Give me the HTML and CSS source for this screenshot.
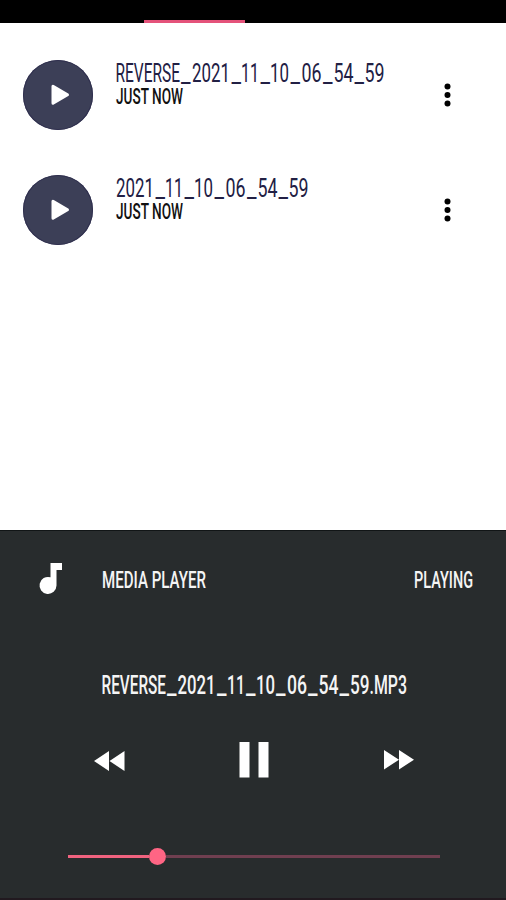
FILE: index.html
```
<!DOCTYPE html>
<html lang="en">
<head>
<meta charset="utf-8">
<title>Media Player</title>
<link rel="stylesheet" href="styles.css">
</head>
<body>
<main class="app">
  <header class="tabs"><div class="indicator"></div></header>
  <section class="list">
    <article class="row">
      <button class="play" aria-label="Play"><svg width="70" height="70" viewBox="0 0 70 70"><path d="M30 26.300V43.200L44.500 34.700Z" fill="#fff" stroke="#fff" stroke-width="3" stroke-linejoin="round"/></svg></button>
      <svg class="info" width="290" height="56" viewBox="0 0 290 56">
        <text class="name" y="22"><tspan x="-.5" textLength="64.500" lengthAdjust="spacingAndGlyphs">REVERSE</tspan><tspan x="65" textLength="9.500" lengthAdjust="spacingAndGlyphs">_</tspan><tspan x="76" textLength="38" lengthAdjust="spacingAndGlyphs">2021</tspan><tspan x="115.500" textLength="9.500" lengthAdjust="spacingAndGlyphs">_</tspan><tspan x="125" textLength="18" lengthAdjust="spacingAndGlyphs">11</tspan><tspan x="144.500" textLength="9.500" lengthAdjust="spacingAndGlyphs">_</tspan><tspan x="154" textLength="19" lengthAdjust="spacingAndGlyphs">10</tspan><tspan x="174.500" textLength="9.500" lengthAdjust="spacingAndGlyphs">_</tspan><tspan x="185.500" textLength="20" lengthAdjust="spacingAndGlyphs">06</tspan><tspan x="207" textLength="9.500" lengthAdjust="spacingAndGlyphs">_</tspan><tspan x="217.500" textLength="20" lengthAdjust="spacingAndGlyphs">54</tspan><tspan x="238.500" textLength="9.500" lengthAdjust="spacingAndGlyphs">_</tspan><tspan x="248.500" textLength="20" lengthAdjust="spacingAndGlyphs">59</tspan></text>
        <text class="time" x="0" y="44" textLength="67" lengthAdjust="spacingAndGlyphs">JUST NOW</text>
      </svg>
      <svg class="more" width="14" height="30" viewBox="0 0 14 30"><circle cx="7.500" cy="6.500" r="3"/><circle cx="7.500" cy="15" r="3"/><circle cx="7.500" cy="23.500" r="3"/></svg>
    </article>
    <article class="row">
      <button class="play" aria-label="Play"><svg width="70" height="70" viewBox="0 0 70 70"><path d="M30 26.300V43.200L44.500 34.700Z" fill="#fff" stroke="#fff" stroke-width="3" stroke-linejoin="round"/></svg></button>
      <svg class="info" width="290" height="56" viewBox="0 0 290 56">
        <text class="name" y="22"><tspan x="0" textLength="38" lengthAdjust="spacingAndGlyphs">2021</tspan><tspan x="39.500" textLength="9.500" lengthAdjust="spacingAndGlyphs">_</tspan><tspan x="49" textLength="18" lengthAdjust="spacingAndGlyphs">11</tspan><tspan x="68.500" textLength="9.500" lengthAdjust="spacingAndGlyphs">_</tspan><tspan x="78" textLength="19" lengthAdjust="spacingAndGlyphs">10</tspan><tspan x="98.500" textLength="9.500" lengthAdjust="spacingAndGlyphs">_</tspan><tspan x="109.500" textLength="20" lengthAdjust="spacingAndGlyphs">06</tspan><tspan x="131" textLength="9.500" lengthAdjust="spacingAndGlyphs">_</tspan><tspan x="141.500" textLength="20" lengthAdjust="spacingAndGlyphs">54</tspan><tspan x="162.500" textLength="9.500" lengthAdjust="spacingAndGlyphs">_</tspan><tspan x="172.500" textLength="20" lengthAdjust="spacingAndGlyphs">59</tspan></text>
        <text class="time" x="0" y="44" textLength="67" lengthAdjust="spacingAndGlyphs">JUST NOW</text>
      </svg>
      <svg class="more" width="14" height="30" viewBox="0 0 14 30"><circle cx="7.500" cy="6.500" r="3"/><circle cx="7.500" cy="15" r="3"/><circle cx="7.500" cy="23.500" r="3"/></svg>
    </article>
  </section>
  <section class="player">
    <div class="player-head">
      <svg class="note" width="24" height="32" viewBox="0 0 24 32"><path d="M11.500 0H23V7H17.500V22.500A8.500 8.500 0 1 1 11.500 14.300Z" fill="#fff"/></svg>
      <svg class="label" width="106" height="32" viewBox="0 0 106 32"><text x="0" y="25" textLength="104" lengthAdjust="spacingAndGlyphs">MEDIA PLAYER</text></svg>
      <svg class="status" width="60" height="32" viewBox="0 0 60 32"><text x="1" y="25" textLength="59" lengthAdjust="spacingAndGlyphs">PLAYING</text></svg>
    </div>
    <svg class="track" width="306" height="36" viewBox="0 0 306 36">
      <text y="27"><tspan x="-.5" textLength="64.500" lengthAdjust="spacingAndGlyphs">REVERSE</tspan><tspan x="65" textLength="9.500" lengthAdjust="spacingAndGlyphs">_</tspan><tspan x="75.500" textLength="38" lengthAdjust="spacingAndGlyphs">2021</tspan><tspan x="115" textLength="9.500" lengthAdjust="spacingAndGlyphs">_</tspan><tspan x="125" textLength="18" lengthAdjust="spacingAndGlyphs">11</tspan><tspan x="144" textLength="9.500" lengthAdjust="spacingAndGlyphs">_</tspan><tspan x="154" textLength="19" lengthAdjust="spacingAndGlyphs">10</tspan><tspan x="174" textLength="9.500" lengthAdjust="spacingAndGlyphs">_</tspan><tspan x="185" textLength="20" lengthAdjust="spacingAndGlyphs">06</tspan><tspan x="206" textLength="9.500" lengthAdjust="spacingAndGlyphs">_</tspan><tspan x="216.500" textLength="20" lengthAdjust="spacingAndGlyphs">54</tspan><tspan x="237.500" textLength="9.500" lengthAdjust="spacingAndGlyphs">_</tspan><tspan x="248" textLength="19.500" lengthAdjust="spacingAndGlyphs">59</tspan><tspan x="267.500" textLength="37.500" lengthAdjust="spacingAndGlyphs">.MP3</tspan></text>
    </svg>
    <div class="controls">
      <svg class="seek back" width="31" height="20" viewBox="0 0 31 20"><path d="M15 0V20L0 10ZM30.500 0V20L15.500 10Z"/></svg>
      <svg class="pause" width="30" height="36" viewBox="0 0 30 36"><path d="M.5 0H10.500V35.500H.5ZM19.500 0H29.500V35.500H19.500Z"/></svg>
      <svg class="seek" width="31" height="20" viewBox="0 0 31 20"><path d="M1 0V19.500L16 9.700ZM16 0V19.500L31 9.700Z"/></svg>
    </div>
    <div class="slider"><div class="elapsed"></div><div class="thumb"></div><div class="remaining"></div></div>
  </section>
</main>
</body>
</html>
```
FILE: styles.css
```
* { box-sizing: border-box; }
body { margin: 0; background: #fff; font-family: Roboto, "Liberation Sans", sans-serif; }
svg { display: block; flex: none; overflow: visible; }
.app { width: 506px; height: 900px; display: flex; flex-direction: column; overflow: hidden; }
.tabs { height: 23px; flex: none; background: #000; display: flex; align-items: flex-end; padding-left: 144px; }
.indicator { width: 101px; height: 3px; background: #e4527a; }
.list { flex: 1; padding: 37px 51px 0 23px; display: flex; flex-direction: column; gap: 45.400px; }
.row { height: 70px; display: flex; align-items: center; }
.play { width: 70px; height: 70px; padding: 0; border: 0; border-radius: 50%; background: #3c3f57; box-shadow: inset 0 0 0 1px #30304f; }
.info { margin-left: 23px; align-self: flex-start; }
.more { margin-left: auto; margin-right: 1px; }
.name { font-size: 25px; fill: #222044; }
.time { font-size: 21.500px; font-weight: 500; fill: #111; }
.player { height: 370px; flex: none; background: #282c2d; border-top: 1px solid #111516; border-bottom: 2px solid #21191f; color: #fff; }
.player text { font-size: 25px; font-weight: 500; fill: #f5f5f5; }
.player-head { display: flex; margin: 32px 33px 0 39px; }
.player .player-head text { font-size: 24px; }
.label { margin-left: 39px; }
.status { margin-left: auto; }
.track { margin: 72px 0 0 102px; }
.controls { height: 36px; display: flex; align-items: center; justify-content: space-between; margin: 39px 92px 0 94px; fill: #fff; }
.back { position: relative; top: 1px; }
.slider { display: flex; align-items: center; height: 17px; margin: 70px 66px 0 68px; }
.elapsed { width: 81px; height: 3px; background: #f0637f; }
.thumb { width: 17px; height: 17px; border-radius: 50%; background: #ff6584; }
.remaining { flex: 1; height: 3px; background: #703f50; }
```
